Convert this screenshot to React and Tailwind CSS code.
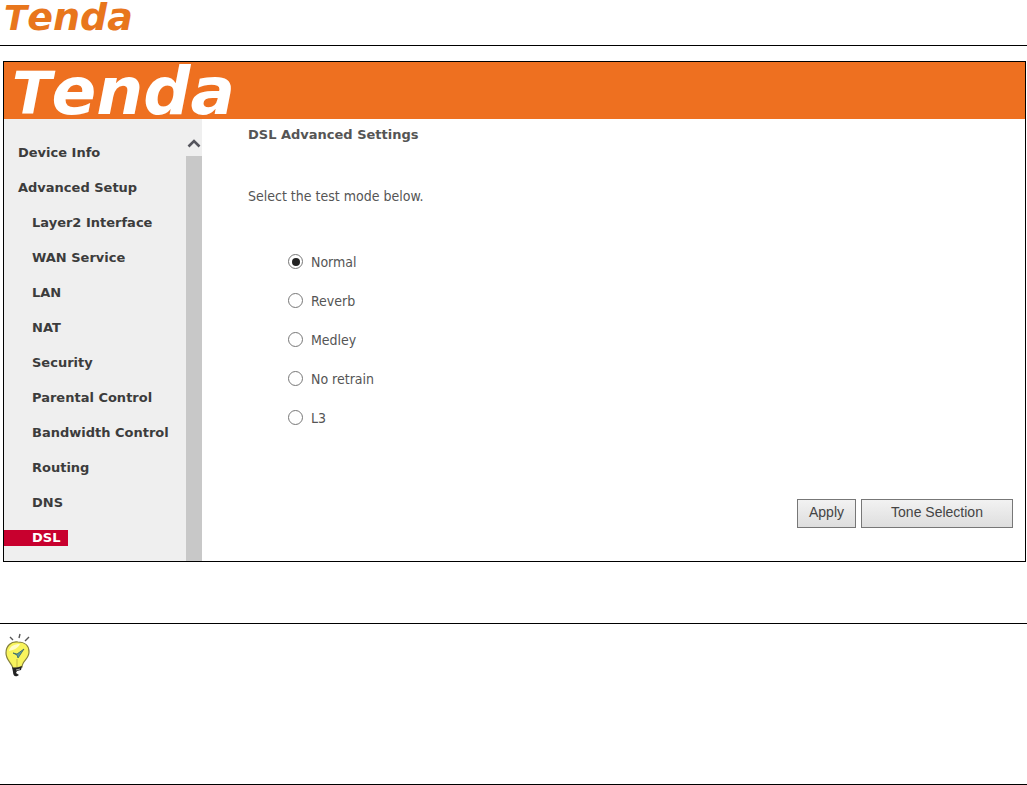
import React, { useState } from 'react';

const menuItems = [
  { label: 'Device Info', level: 1 },
  { label: 'Advanced Setup', level: 1 },
  { label: 'Layer2 Interface', level: 2 },
  { label: 'WAN Service', level: 2 },
  { label: 'LAN', level: 2 },
  { label: 'NAT', level: 2 },
  { label: 'Security', level: 2 },
  { label: 'Parental Control', level: 2 },
  { label: 'Bandwidth Control', level: 2 },
  { label: 'Routing', level: 2 },
  { label: 'DNS', level: 2 },
  { label: 'DSL', level: 2 }
];

const testModes = ['Normal', 'Reverb', 'Medley', 'No retrain', 'L3'];

const BulbIcon = () => (
  <svg width="32" height="46" viewBox="0 0 32 46" fill="none" aria-hidden="true">
    <path d="M7 5l3 3M17 2l-1 4M26 5l-4 4" stroke="#555" strokeWidth="1.4" />
    <path
      d="M15 10C8 9 3 14 3 21c0 7 5 9 7 15l9-1c0-6 7-8 7-15 0-6-4-10-11-10z"
      fill="#f8f45c"
      stroke="#85813c"
      strokeWidth="1.2"
    />
    <path d="M6 19c1-5 5-7 11-7-2 4-6 6-11 7z" fill="#fffcc8" />
    <path d="M10 21l4 1 7-5-6 9-1-3z" fill="#5f9a9e" stroke="#34656a" strokeWidth=".8" />
    <path d="M14 27v8" stroke="#c5b943" />
    <path d="M9 35c3 2 7 0 10-1l-1 4-4 1-1 2 3 2c-4 3-6 0-6-3z" fill="#222" />
    <path d="M13 38l4-1" stroke="#aaa" />
  </svg>
);

const Sidebar = () => (
  <aside className="flex w-[198px] shrink-0 bg-[#efefef]">
    <nav className="flex-1 pt-4 pb-[6px]">
      <ul>
        {menuItems.map(item => (
          <li key={item.label} className="flex h-[35px] items-center">
            <a
              href="#"
              className={`whitespace-nowrap pr-2 font-['DejaVu_Sans',sans-serif] text-[13px] leading-4 font-bold ${
                item.level === 1 ? 'pl-[14px]' : 'pl-7'
              } ${item.label === 'DSL' ? 'bg-[#c8002e] text-white' : 'text-[#3c3c3c]'}`}
            >
              {item.label}
            </a>
          </li>
        ))}
      </ul>
    </nav>
    <div className="flex w-4 shrink-0 flex-col items-center">
      <svg className="mt-5" width="14" height="9" viewBox="0 0 14 9" fill="none" aria-hidden="true">
        <path d="M1.5 7.5L7 2l5.500 5.500" stroke="#55555d" strokeWidth="2.600" />
      </svg>
      <div className="mt-2 w-full flex-1 bg-[#c8c8c8]" />
    </div>
  </aside>
);

const App = () => {
  const [mode, setMode] = useState('Normal');

  return (
    <div className="bg-white font-['DejaVu_Sans_Condensed','DejaVu_Sans',sans-serif] text-sm text-[#555]">
      <header className="h-[46px] border-b border-black pl-1 font-['DejaVu_Sans',sans-serif] text-[38px] leading-[34px] font-bold text-[#e8761c] italic">
        <span className="text-[34px]">T</span>enda
      </header>

      <main className="mt-[15px] mr-px ml-[3px] border border-black">
        <div className="h-[57px] bg-[#ee7020] pl-2 font-['DejaVu_Sans',sans-serif] text-[66px] leading-[60px] font-bold whitespace-nowrap text-white italic">
          <span className="text-[58px]">T</span>enda
        </div>

        <div className="flex">
          <Sidebar />
          <section className="flex flex-1 flex-col pt-2 pr-3 pb-[33px] pl-[46px]">
            <h1 className="font-['DejaVu_Sans',sans-serif] text-[13px] leading-4 font-bold">DSL Advanced Settings</h1>
            <p className="mt-[45px] leading-4">Select the test mode below.</p>

            <div className="mt-[38px] flex flex-col pl-10">
              {testModes.map(name => (
                <label key={name} className="flex h-[39px] items-center gap-2">
                  <input
                    type="radio"
                    name="testMode"
                    checked={mode === name}
                    onChange={() => setMode(name)}
                    className="flex size-[15px] appearance-none items-center justify-center rounded-full border border-[#777] bg-white checked:before:size-2 checked:before:rounded-full checked:before:bg-[#222]"
                  />
                  {name}
                </label>
              ))}
            </div>

            <div className="mt-auto flex justify-end gap-[5px] font-['Liberation_Sans',sans-serif] text-[#444]">
              <button className="h-[29px] w-[59px] border border-[#777] bg-linear-to-b from-[#f2f2f2] to-[#dedede] pb-1">
                Apply
              </button>
              <button className="h-[29px] w-[152px] border border-[#777] bg-linear-to-b from-[#f2f2f2] to-[#dedede] pb-1">
                Tone Selection
              </button>
            </div>
          </section>
        </div>
      </main>

      <aside className="mt-[61px] h-[162px] border-y border-black pt-2 pl-[3px]">
        <BulbIcon />
      </aside>
    </div>
  );
};

export default App;
